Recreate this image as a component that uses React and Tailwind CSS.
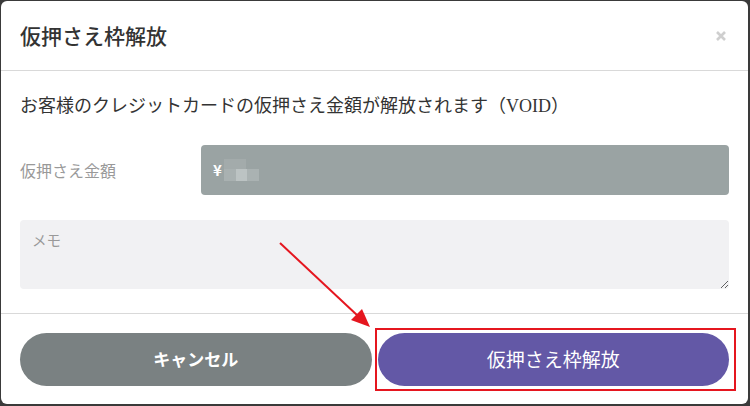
import React from "react";

const jp = { fontFamily: '"Noto Sans CJK JP", "Noto Sans", sans-serif' };

const Mosaic = () => (
  <span className="relative ml-[2px] inline-block h-[22px] w-[36px] align-middle">
    <span className="absolute left-0 top-0 h-[10px] w-[22px] bg-[#a3abab]" />
    <span className="absolute left-0 top-[10px] h-[12px] w-[12px] bg-[#a9b1b1]" />
    <span className="absolute left-[12px] top-[10px] h-[12px] w-[11px] bg-[#bcc3c3]" />
    <span className="absolute left-[23px] top-[10px] h-[12px] w-[12px] bg-[#aab2b2]" />
  </span>
);

const App = () => {
  return (
    <div className="relative h-[406px] w-[750px] bg-[#3a3a3a] pb-[2px] pl-px pr-[2px] pt-px" style={jp}>
      {/* modal */}
      <div className="flex h-full flex-col rounded-md bg-white">
        {/* header */}
        <div className="flex h-[70px] items-center justify-between border-b border-[#d9d9d9] px-[19px]">
          <h2 className="text-[21px] font-medium text-[#333]">仮押さえ枠解放</h2>
          <svg width="10" height="10" viewBox="0 0 10 10" className="mr-[3px]">
            <path d="M1 1L9 9M9 1L1 9" stroke="#cfcfcf" strokeWidth="2.6" />
          </svg>
        </div>
        {/* body */}
        <div className="border-b border-[#d9d9d9] px-[19px] pb-[24px] pt-5">
          <p className="h-[26px] overflow-hidden text-[18px] leading-[26px] text-[#333]">
            お客様のクレジットカードの仮押さえ金額が解放されます（
            <span style={{ fontFamily: '"Liberation Serif", serif' }}>VOID</span>）
          </p>
          <div className="mt-7 flex items-center">
            <label className="w-[181px] text-[16px] text-[#999]">仮押さえ金額</label>
            <div className="flex h-[50px] flex-1 items-center rounded bg-[#9aa3a3] px-3 text-[15px] text-white">
              <span className="font-semibold">¥</span>
              <Mosaic />
            </div>
          </div>
          <textarea
            placeholder="メモ"
            className="mt-[25px] block h-[69px] w-full rounded bg-[#f1f1f3] px-3 pt-[9px] text-[14.5px] outline-none placeholder:text-[#999]"
          />
        </div>
        {/* footer */}
        <div className="flex flex-1 items-center gap-[6px] px-[19px]">
          <button className="h-[53px] flex-1 rounded-full bg-[#7a8182] text-[17px] font-bold text-white">
            キャンセル
          </button>
          <button className="h-[53px] flex-1 rounded-full bg-[#6358a6] text-[19px] text-white">
            仮押さえ枠解放
          </button>
        </div>
      </div>

      {/* annotation */}
      <div className="pointer-events-none absolute left-[375px] top-[328px] h-[63px] w-[361px] border-2 border-[#e5161f]" />
      <svg className="pointer-events-none absolute left-0 top-0" width="750" height="406">
        <line x1="280" y1="243" x2="358" y2="316" stroke="#e5161f" strokeWidth="2" />
        <polygon points="370,327 351,320 362,309" fill="#e5161f" />
      </svg>
    </div>
  );
};

export default App;
